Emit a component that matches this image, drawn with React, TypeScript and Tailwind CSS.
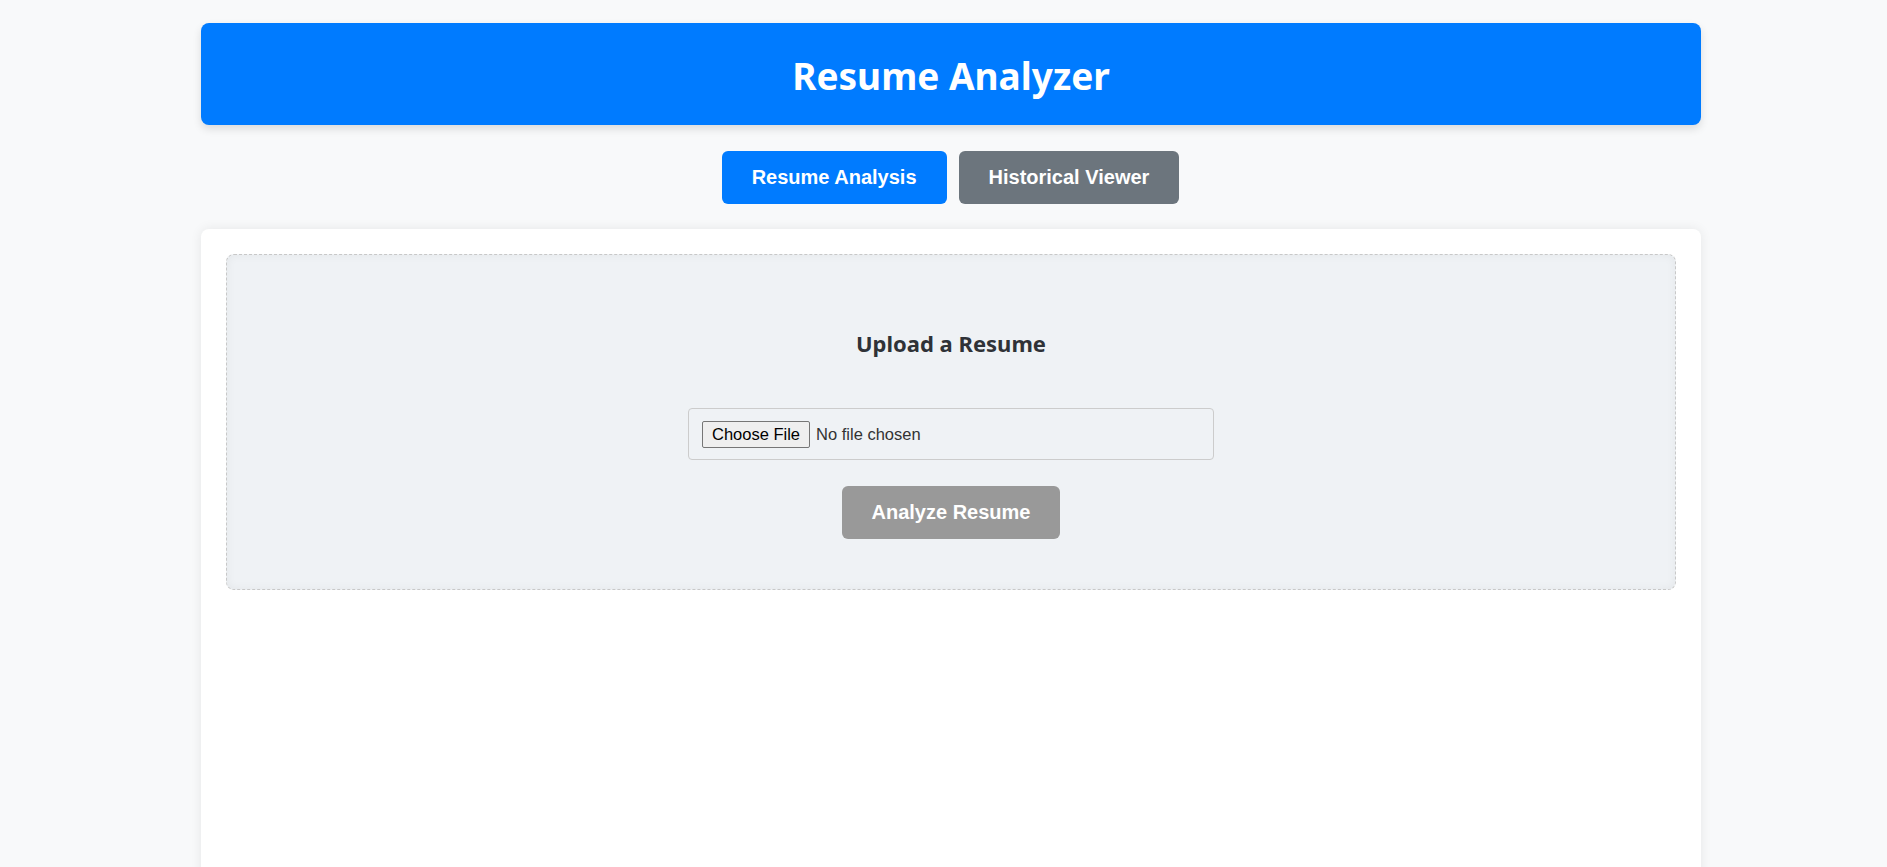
import React from "react";

export default function App() {
  return (
    <div className="min-h-screen bg-[#f8f9fa] overflow-hidden" style={{ fontFamily: '"Liberation Sans", Arial, sans-serif' }}>
      <div className="ml-[201px] w-[1500px] pt-[23px]">
        <header className="bg-[#007bff] rounded-[8px] shadow-[0_4px_8px_rgba(0,0,0,0.12)] pt-[27px] pb-[23px] text-center">
          <h1 className="text-white text-[37px] leading-[52px] font-bold" style={{ fontFamily: '"Noto Sans", "Open Sans", sans-serif' }}>
            Resume Analyzer
          </h1>
        </header>

        <nav className="flex justify-center gap-[12px] mt-[26px] pr-[1px]">
          <button className="bg-[#007bff] text-white font-bold text-[20px] leading-[23px] py-[15px] px-[30px] rounded-[6px]">
            Resume Analysis
          </button>
          <button className="bg-[#6c757d] text-white font-bold text-[20px] leading-[23px] py-[15px] px-[30px] rounded-[6px]">
            Historical Viewer
          </button>
        </nav>

        <main className="mt-[25px] bg-white rounded-[8px] shadow-[0_0_12px_rgba(0,0,0,0.08)] p-[25px] min-h-[700px]">
          <section className="border border-dashed border-[#c8c8c8] rounded-[8px] bg-[#eff2f5] shadow-[inset_0_0_10px_rgba(0,0,0,0.05)] pt-[73px] pb-[50px] flex flex-col items-center">
            <h3 className="text-[#2f3237] text-[22px] leading-[30px] font-bold" style={{ fontFamily: '"Noto Sans", "Open Sans", sans-serif' }}>
              Upload a Resume
            </h3>
            <div className="mt-[50px] w-[526px] h-[52px] border border-[#cccccc] rounded-[4px] px-[13px] flex items-center">
              <span className="h-[27px] px-[9px] border border-[#767676] bg-[#efefef] rounded-[2px] text-black text-[16.5px] leading-[25px] whitespace-nowrap">
                Choose File
              </span>
              <span className="ml-[6px] text-[#333] text-[16.5px] leading-[20px]">No file chosen</span>
            </div>
            <button disabled className="mt-[26px] bg-[#999999] text-white font-bold text-[20px] leading-[23px] py-[15px] px-[30px] rounded-[6px] cursor-not-allowed">
              Analyze Resume
            </button>
          </section>
        </main>
      </div>
    </div>
  );
}
